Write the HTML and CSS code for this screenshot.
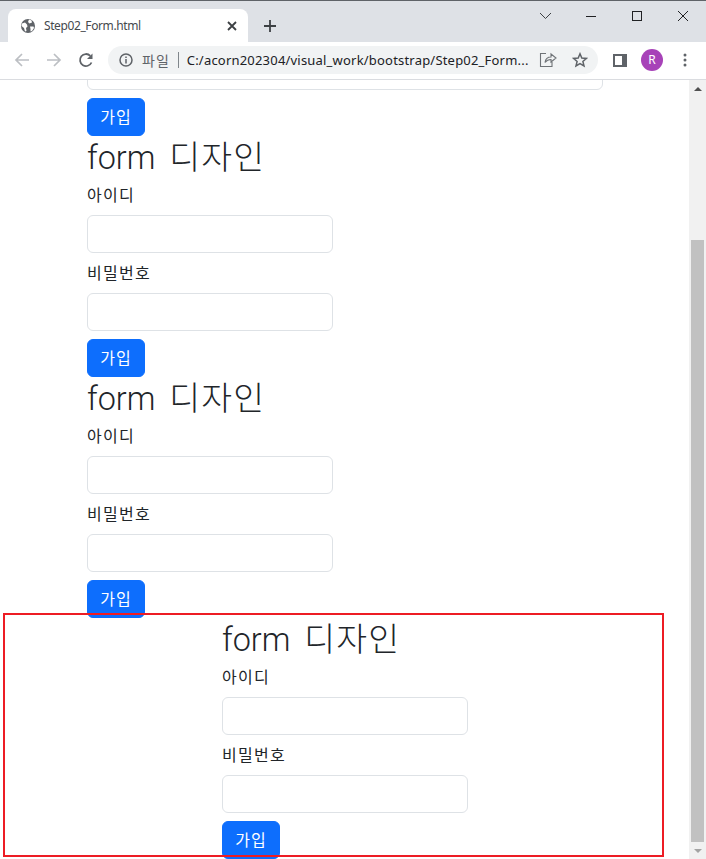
FILE: index.html
```html
<!DOCTYPE html>
<html>
<head>
    <title>Step02_Form.html</title>
    <link rel="stylesheet" href="styles.css">
</head>
<body>
    <div class="tabstrip">
        <div class="tab">
            <svg class="favicon" width="16" height="16" viewBox="0 0 16 16"><circle cx="8" cy="8" r="7" fill="#5f6368"/><path d="M2 5.500 5 4.500 7 6.500 7.500 8.500 6 10 6.500 13 5 13.500 4 10 1.500 8ZM9 1.500 11.500 2.500 12 4.500 9.500 5.500 8 4ZM10 8.500H13.500L14 10 12 13 10.500 13.500 10.500 11Z" fill="#fff"/></svg>
            <span class="tab-title">Step02_Form.html</span>
            <svg class="tab-close" width="10" height="10" viewBox="0 0 10 10"><path d="M1 1 9 9M9 1 1 9" stroke="#3c4043" stroke-width="1.8"/></svg>
        </div>
        <svg class="newtab" width="14" height="14" viewBox="0 0 14 14"><path d="M7 1V13M1 7H13" stroke="#3c4043" stroke-width="1.8"/></svg>
        <div class="winctrls">
            <svg width="46" height="30" viewBox="0 0 46 30"><path d="M18 12 23.500 17.500 29 12" fill="none" stroke="#3c4043"/></svg>
            <svg width="46" height="30" viewBox="0 0 46 30"><path d="M18 15.500H28" stroke="#202124"/></svg>
            <svg width="46" height="30" viewBox="0 0 46 30"><rect x="18.500" y="10.500" width="9" height="9" fill="none" stroke="#202124"/></svg>
            <svg width="46" height="30" viewBox="0 0 46 30"><path d="M18 10 28 20M28 10 18 20" stroke="#202124"/></svg>
        </div>
    </div>

    <div class="toolbar">
        <svg class="navbtn" width="16" height="16" viewBox="0 0 16 16"><path d="M15 8H2M8 2 2 8 8 14" fill="none" stroke="#bcbfc3" stroke-width="1.7"/></svg>
        <svg class="navbtn" width="16" height="16" viewBox="0 0 16 16"><path d="M1 8H14M8 2 14 8 8 14" fill="none" stroke="#bcbfc3" stroke-width="1.7"/></svg>
        <svg class="navbtn" width="16" height="16" viewBox="0 0 16 16"><path d="M13.500 10.500A6 6 0 1 1 12.300 3.800" fill="none" stroke="#5f6368" stroke-width="1.8"/><path d="M14.500 1.500V7H9Z" fill="#5f6368"/></svg>
        <div class="omnibox">
            <svg class="info" width="14" height="14" viewBox="0 0 14 14"><circle cx="7" cy="7" r="6" fill="none" stroke="#5f6368" stroke-width="1.5"/><path d="M7 6V10.500M7 3.500V5" stroke="#5f6368" stroke-width="1.5"/></svg>
            <span class="scheme">파일</span>
            <span class="sep"></span>
            <span class="url">C:/acorn202304/visual_work/bootstrap/Step02_Form...</span>
            <svg class="share" width="18" height="16" viewBox="0 0 18 16"><path d="M7 1.500H1.500V14.500H13V10M6 10.500C6.500 7 9 5 12 5V2L17 6 12 10V7.500C9.500 7.500 7.500 8.500 6 10.500Z" fill="none" stroke="#6f7377" stroke-width="1.100"/></svg>
            <svg class="star" width="16" height="16" viewBox="0 0 16 16"><path d="M8 1.800 9.800 6 14.400 6.400 10.900 9.400 12 13.900 8 11.500 4 13.900 5.100 9.400 1.600 6.400 6.200 6Z" fill="none" stroke="#5f6368" stroke-width="1.500"/></svg>
        </div>
        <svg class="panel" width="14" height="13" viewBox="0 0 14 13"><rect x="1" y="1" width="12" height="11" fill="none" stroke="#5f6368" stroke-width="2"/><rect x="9" y="1" width="4" height="11" fill="#5f6368"/></svg>
        <div class="avatar">R</div>
        <svg class="kebab" width="4" height="14" viewBox="0 0 4 14"><circle cx="2" cy="2" r="1.500" fill="#5f6368"/><circle cx="2" cy="7" r="1.500" fill="#5f6368"/><circle cx="2" cy="12" r="1.500" fill="#5f6368"/></svg>
    </div>

    <div class="viewport">
        <div class="page">
            <div class="first-rest">
                <input class="form-control wide" type="text">
                <button class="btn">가입</button>
            </div>

            <form class="signup">
                <h1>form <span class="ko">디자인</span></h1>
                <div class="field">
                    <label>아이디</label>
                    <input class="form-control" type="text">
                </div>
                <div class="field">
                    <label>비밀번호</label>
                    <input class="form-control" type="password">
                </div>
                <button class="btn" type="button">가입</button>
            </form>

            <form class="signup">
                <h1>form <span class="ko">디자인</span></h1>
                <div class="field">
                    <label>아이디</label>
                    <input class="form-control" type="text">
                </div>
                <div class="field">
                    <label>비밀번호</label>
                    <input class="form-control" type="password">
                </div>
                <button class="btn" type="button">가입</button>
            </form>

            <form class="signup shifted">
                <h1>form <span class="ko">디자인</span></h1>
                <div class="field">
                    <label>아이디</label>
                    <input class="form-control" type="text">
                </div>
                <div class="field">
                    <label>비밀번호</label>
                    <input class="form-control" type="password">
                </div>
                <button class="btn" type="button">가입</button>
            </form>

            <!-- red box drawn over the screenshot -->
            <div class="redbox"></div>
        </div>

        <div class="scrollbar">
            <div class="sb-btn"><span class="arrow-up"></span></div>
            <div class="sb-track"><div class="sb-thumb"></div></div>
            <div class="sb-btn"><span class="arrow-down"></span></div>
        </div>
    </div>
</body>
</html>
```

FILE: styles.css
```css
* {
    box-sizing: border-box;
}

html, body {
    height: 100%;
}

body {
    margin: 0;
    display: flex;
    flex-direction: column;
    overflow: hidden;
    background: #fff;
    color: #212529;
    font-family: "Noto Sans", "Noto Sans CJK KR", sans-serif;
}

/* tab strip */
.tabstrip {
    height: 42px;
    flex: none;
    display: flex;
    align-items: flex-end;
    background: #dee1e6;
    border-top: 1px solid #5f6368;
    padding-left: 8px;
}

.tab {
    width: 240px;
    height: 33px;
    display: flex;
    align-items: center;
    padding: 0 11px 0 12px;
    background: #fff;
    border-radius: 8px 8px 0 0;
}

.tab-title {
    margin-left: 8px;
    font-size: 12px;
    letter-spacing: -0.4px;
    color: #45494d;
    flex: 1;
    white-space: nowrap;
}

.newtab {
    align-self: flex-end;
    margin: 0 0 9px 15px;
}

.winctrls {
    margin-left: auto;
    align-self: flex-start;
    display: flex;
}

.winctrls svg {
    display: block;
}

/* address bar */
.toolbar {
    height: 38px;
    flex: none;
    display: flex;
    align-items: center;
    background: #fff;
    border-bottom: 1px solid #dadce0;
    padding: 0 0 1px 14px;
}

.navbtn {
    margin-right: 16px;
}

.omnibox {
    width: 490px;
    height: 28px;
    margin-left: -2px;
    display: flex;
    align-items: center;
    padding-left: 11px;
    background: #f1f3f4;
    border-radius: 14px;
}

.scheme {
    margin-left: 9px;
    font-size: 14px;
    letter-spacing: 1px;
    color: #5f6368;
}

.sep {
    width: 1px;
    height: 16px;
    margin: 0 8px;
    background: #80868b;
}

.url {
    flex: 1;
    font-size: 13px;
    letter-spacing: 0.2px;
    color: #202124;
    white-space: nowrap;
}

.share {
    margin-right: 15px;
}

.star {
    margin-right: 10px;
}

.panel {
    margin-left: 15px;
}

.avatar {
    width: 22px;
    height: 22px;
    margin-left: 14px;
    border-radius: 50%;
    background: #a742b8;
    color: #fff;
    font-size: 12px;
    line-height: 22px;
    text-align: center;
}

.kebab {
    margin-left: 20px;
}

/* page */
.viewport {
    flex: 1;
    min-height: 0;
    display: flex;
}

.page {
    position: relative;
    flex: 1;
    min-width: 0;
    overflow: hidden;
    padding: 0 87px;
}

.first-rest {
    margin-top: -28px;
}

.signup {
    margin: 0;
}

.shifted {
    margin-left: 135px;
}

h1 {
    height: 43px;
    margin: 0 0 4px;
    padding-top: 2px;
    font-family: Roboto, "Noto Sans CJK KR", sans-serif;
    font-size: 32.34px;
    font-weight: 300;
    line-height: 39px;
    word-spacing: 6px;
    white-space: nowrap;
}

.ko {
    font-size: 33.5px;
    letter-spacing: 1.2px;
}

.field {
    margin-bottom: 8px;
}

label {
    display: block;
    margin-bottom: 8px;
    font-size: 16px;
    letter-spacing: 1.3px;
    line-height: 24px;
}

.form-control {
    display: block;
    width: 246px;
    height: 38px;
    padding: 6px 12px;
    background: #fff;
    border: 1px solid #dee2e6;
    border-radius: 6px;
}

.wide {
    width: 516px;
    margin-bottom: 8px;
}

.btn {
    display: block;
    width: 58px;
    height: 38px;
    padding: 0 0 2px;
    background: #0d6efd;
    color: #fff;
    border: 1px solid #0d6efd;
    border-radius: 6px;
    font-family: inherit;
    font-size: 16px;
    letter-spacing: 1px;
}

.redbox {
    position: absolute;
    left: 3px;
    top: 533px;
    width: 661px;
    height: 244px;
    border: 2px solid #ed1c24;
}

/* scrollbar */
.scrollbar {
    width: 17px;
    flex: none;
    display: flex;
    flex-direction: column;
    background: #f1f1f1;
}

.sb-btn {
    height: 17px;
    flex: none;
    display: flex;
    align-items: center;
    justify-content: center;
}

.arrow-up {
    border: 4px solid transparent;
    border-top: 0;
    border-bottom: 4px solid #505050;
}

.arrow-down {
    border: 4px solid transparent;
    border-bottom: 0;
    border-top: 4px solid #a3a3a3;
}

.sb-track {
    flex: 1;
    display: flex;
    flex-direction: column;
    justify-content: flex-end;
    padding: 0 2px;
}

.sb-thumb {
    height: 602px;
    background: #c1c1c1;
}
```
